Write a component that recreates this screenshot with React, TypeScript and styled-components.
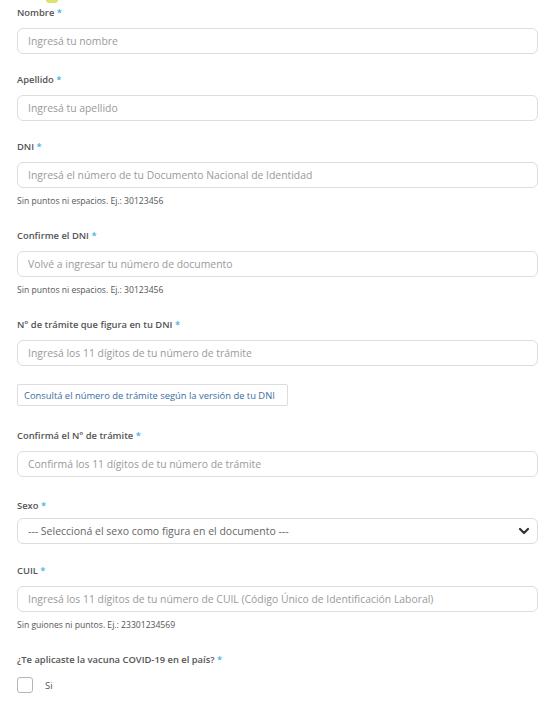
import React from 'react';
import styled, { createGlobalStyle } from 'styled-components';

const GlobalStyle = createGlobalStyle`
  html, body {
    margin: 0;
    padding: 0;
    background: #fff;
  }
  body {
    font-family: "Open Sans", "Noto Sans", sans-serif;
    color: #555;
  }
`;

const Page = styled.div`
  padding: 0 18px 20px 17px;
  display: flex;
  flex-direction: column;
`;

const TopMark = styled.div`
  width: 12px;
  height: 3px;
  margin-left: 29px;
  margin-bottom: 4px;
  border-radius: 0 0 6px 6px;
  background: #dbe36b;
`;

const Field = styled.div<{ $mb?: number }>`
  display: flex;
  flex-direction: column;
  margin-bottom: ${(p) => (p.$mb ?? 20)}px;
`;

const Label = styled.label<{ $mb?: number }>`
  font-size: 9.4px;
  line-height: 12px;
  font-weight: 600;
  color: #555;
  margin-bottom: ${(p) => (p.$mb ?? 9)}px;
`;

const Req = styled.span`
  color: #3fb1e0;
`;

const Input = styled.input`
  box-sizing: border-box;
  width: 100%;
  height: 26px;
  border: 1px solid #ddd;
  border-radius: 6px;
  padding: 0 10px;
  font-family: "Open Sans", "Noto Sans", sans-serif;
  font-size: 10.4px;
  color: #555;
  background: #fff;
  outline: none;

  &::placeholder {
    color: #9a9a9a;
  }
`;

const Help = styled.div`
  font-size: 8.6px;
  line-height: 12px;
  font-weight: 500;
  color: #555;
  margin-top: 7px;
  margin-bottom: 3px;
`;

const InfoButton = styled.button`
  align-self: flex-start;
  box-sizing: border-box;
  height: 22px;
  width: 271px;
  margin-top: -2px;
  margin-bottom: 24px;
  padding: 0 6px;
  border: 1px solid #ddd;
  border-radius: 2px;
  background: #fff;
  color: #3a6ea5;
  font-family: "Open Sans", "Noto Sans", sans-serif;
  font-size: 9.4px;
  text-align: left;
  white-space: nowrap;
  cursor: pointer;
`;

const SelectBox = styled.div`
  box-sizing: border-box;
  height: 26px;
  border: 1px solid #ddd;
  border-radius: 6px;
  padding: 0 6px 0 10px;
  display: flex;
  align-items: center;
  justify-content: space-between;
  font-size: 10.5px;
  color: #666;
`;

const CheckRow = styled.div`
  display: flex;
  align-items: center;
  gap: 12px;
  margin-top: -2px;
`;

const Box = styled.span`
  box-sizing: border-box;
  width: 16px;
  height: 16px;
  border: 1px solid #b5b5b5;
  border-radius: 3px;
  background: #fff;
`;

const CheckText = styled.span`
  font-size: 9.4px;
  color: #555;
`;

const Chevron = () => (
  <svg width="14" height="14" viewBox="0 0 14 14">
    <path d="M3 5 L7 9 L11 5" fill="none" stroke="#333" strokeWidth="2.2" strokeLinecap="round" strokeLinejoin="round" />
  </svg>
);

const App: React.FC = () => {
  return (
    <Page>
      <GlobalStyle />
      <TopMark />

      <Field $mb={20}>
        <Label>Nombre <Req>*</Req></Label>
        <Input placeholder="Ingresá tu nombre" />
      </Field>

      <Field $mb={20}>
        <Label>Apellido <Req>*</Req></Label>
        <Input placeholder="Ingresá tu apellido" />
      </Field>

      <Field $mb={20}>
        <Label>DNI <Req>*</Req></Label>
        <Input placeholder="Ingresá el número de tu Documento Nacional de Identidad" />
        <Help>Sin puntos ni espacios. Ej.: 30123456</Help>
      </Field>

      <Field $mb={20}>
        <Label>Confirme el DNI <Req>*</Req></Label>
        <Input placeholder="Volvé a ingresar tu número de documento" />
        <Help>Sin puntos ni espacios. Ej.: 30123456</Help>
      </Field>

      <Field>
        <Label>N° de trámite que figura en tu DNI <Req>*</Req></Label>
        <Input placeholder="Ingresá los 11 dígitos de tu número de trámite" />
      </Field>

      <InfoButton>Consultá el número de trámite según la versión de tu DNI</InfoButton>

      <Field $mb={23}>
        <Label>Confirmá el N° de trámite <Req>*</Req></Label>
        <Input placeholder="Confirmá los 11 dígitos de tu número de trámite" />
      </Field>

      <Field $mb={21}>
        <Label $mb={6}>Sexo <Req>*</Req></Label>
        <SelectBox>
          <span>--- Seleccioná el sexo como figura en el documento ---</span>
          <Chevron />
        </SelectBox>
      </Field>

      <Field $mb={20}>
        <Label>CUIL <Req>*</Req></Label>
        <Input placeholder="Ingresá los 11 dígitos de tu número de CUIL (Código Único de Identificación Laboral)" />
        <Help>Sin guiones ni puntos. Ej.: 23301234569</Help>
      </Field>

      <Field>
        <Label $mb={13}>¿Te aplicaste la vacuna COVID-19 en el país? <Req>*</Req></Label>
        <CheckRow>
          <Box />
          <CheckText>Si</CheckText>
        </CheckRow>
      </Field>
    </Page>
  );
};

export default App;
